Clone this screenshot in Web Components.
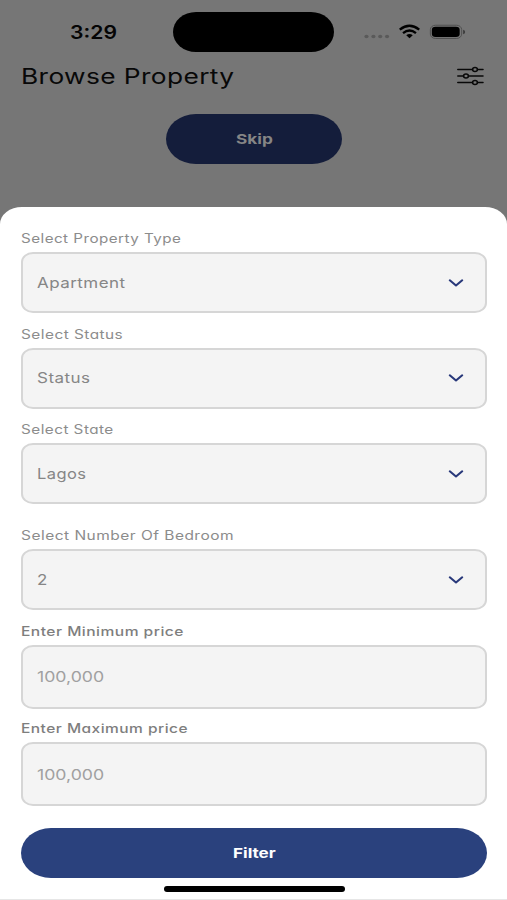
<!DOCTYPE html>
<html lang="en">
<head>
<meta charset="utf-8">
<title>Browse Property</title>
<style>
html, body { margin: 0; height: 900px; overflow: hidden; background: #767676; font-family: Inter, "Liberation Sans", sans-serif; }
</style>
</head>
<body>
<property-screen></property-screen>
<script>
const define = (name, html, setup) => {
  const tpl = document.createElement('template');
  tpl.innerHTML = html;
  customElements.define(name, class extends HTMLElement {
    constructor() {
      super();
      this.attachShadow({ mode: 'open' }).appendChild(tpl.content.cloneNode(true));
    }
    connectedCallback() { if (setup) setup(this, this.shadowRoot); }
  });
};

/* Text stretched horizontally to a given width. */
define('wide-text', `
<style>
:host { display: block; white-space: nowrap; line-height: 20px; height: 20px; font-feature-settings: "cv11"; }
:host([plain]) { font-feature-settings: normal; }
span { display: inline-block; transform-origin: 0 50%; }
</style><span></span>`, (el, root) => {
  const s = root.querySelector('span');
  s.textContent = el.getAttribute('text');
  const w = +el.getAttribute('w');
  el.style.width = w + 'px';
  s.style.transform = 'none';
  s.style.transform = 'scaleX(' + w / s.offsetWidth + ')';
});

define('status-bar', `
<style>
:host { display: flex; height: 52px; box-sizing: border-box; padding: 12px 41px 0 70px; align-items: flex-start; color: #050505; }
wide-text { font-size: 18px; font-weight: 600; margin-top: 11px; }
.island { width: 162px; height: 40px; border-radius: 23px / 20px; background: #000; margin-left: 56px; }
svg { margin-left: 29px; margin-top: 9px; display: block; }
</style>
<wide-text plain text="3:29" w="47"></wide-text>
<div class="island"></div>
<svg width="104" height="22" viewBox="0 0 104 22">
  <g fill="#5a5a5a"><ellipse cx="3.5" cy="15.5" rx="2.1" ry="1.8"/><ellipse cx="10.5" cy="15.5" rx="2.1" ry="1.8"/><ellipse cx="17.3" cy="15.5" rx="2.1" ry="1.8"/><ellipse cx="24.2" cy="15.5" rx="2.1" ry="1.8"/></g>
  <g transform="translate(.8)"><g fill="none" stroke="#000" stroke-width="2.4"><path d="M36.2 8.6Q46 0.8 55.8 8.6"/><path d="M39.5 12.1Q46 6.9 52.5 12.1"/></g>
  <path d="M42.7 14.3Q46 11.8 49.3 14.3L46 17.2Z" fill="#000"/></g>
  <rect x="67.8" y="4.2" width="31.5" height="13.3" rx="5" ry="4.4" fill="none" stroke="#505050"/>
  <rect x="69.3" y="5.7" width="28" height="10.3" rx="3.7" ry="3"/>
  <path d="M100.8 8.8Q102.8 9.2 102.8 11T100.8 13.2Z" fill="#3c3c3c"/>
</svg>`);

define('page-header', `
<style>
:host { display: flex; height: 48px; box-sizing: border-box; padding: 0 23px 0 21px; align-items: center; justify-content: space-between; color: #080808; }
wide-text { font-size: 21px; line-height: 26px; height: 26px; margin-top: 2px; letter-spacing: .3px; }
svg { display: block; }
</style>
<wide-text text="Browse Property" w="213"></wide-text>
<svg width="27" height="20" viewBox="0 0 27 20" fill="none" stroke="#080808" stroke-width="1.5" stroke-linecap="round">
  <path d="M.8 3.5H15.5M20.5 3.5H26M.8 10H6.5M11.5 10H26M.8 16.5H15.5M20.5 16.5H26"/>
  <ellipse cx="18" cy="3.5" rx="2.4" ry="2"/><ellipse cx="9" cy="10" rx="2.4" ry="2"/><ellipse cx="18" cy="16.5" rx="2.4" ry="2"/>
</svg>`);

define('pill-button', `
<style>
:host { display: flex; align-items: center; justify-content: center; height: 50px; border-radius: 30px / 25px; background: #2a417d; color: #fff; font-size: 13.5px; font-weight: 700; }
:host([dim]) { background: #141d3b; color: #858585; }
</style><slot></slot>`);

define('form-field', `
<style>
:host { display: block; }
.label { color: #8c8c8c; font-size: 12.8px; letter-spacing: .4px; padding-top: 1px; margin-bottom: 3px; }
.box { display: flex; align-items: center; justify-content: space-between; box-sizing: border-box; height: 61px; padding: 0 21px 0 14px; border: 2px solid #d6d6d6; border-radius: 12px / 10px; background: #f4f4f4; color: #868686; font-size: 14.5px; letter-spacing: .4px; }
:host([input]) .label { color: #7e7e7e; font-weight: 500; }
:host([input]) .box { height: 64px; color: #a0a0a0; padding-top: 1px; letter-spacing: 0; }
:host([input]) svg { display: none; }
svg { display: block; }
</style>
<div class="label"></div>
<div class="box"><slot></slot>
<svg width="16" height="10" viewBox="0 0 16 10"><path d="M1.8 2.3L8 7.5L14.2 2.3" fill="none" stroke="#28387a" stroke-width="2.1" stroke-linecap="round" stroke-linejoin="round"/></svg></div>`, (el, root) => {
  const t = document.createElement('wide-text');
  t.setAttribute('text', el.getAttribute('label'));
  t.setAttribute('w', el.getAttribute('lw'));
  root.querySelector('.label').replaceChildren(t);
});

define('filter-sheet', `
<style>
:host { display: flex; flex-direction: column; box-sizing: border-box; height: 693px; padding: 21px 20px 0 21px; background: #fff; border-radius: 22px 22px 0 0 / 17px 17px 0 0; border-bottom: 1px solid #e6e6e6; }
form-field { margin-bottom: 10.5px; }
.gap { margin-bottom: 21px; }
form-field[input] { margin-bottom: 9.6px; }
.home { width: 181px; height: 6px; border-radius: 3px; background: #000; margin: 8px 0 0 143px; }
pill-button { margin-top: 12px; }
</style>
<form-field label="Select Property Type" lw="160"><wide-text plain text="Apartment" w="89"></wide-text></form-field>
<form-field label="Select Status" lw="102"><wide-text plain text="Status" w="54"></wide-text></form-field>
<form-field class="gap" label="Select State" lw="93"><wide-text plain text="Lagos" w="50"></wide-text></form-field>
<form-field label="Select Number Of Bedroom" lw="213"><wide-text plain text="2" w="10.5"></wide-text></form-field>
<form-field input label="Enter Minimum price" lw="163"><wide-text plain text="100,000" w="67"></wide-text></form-field>
<form-field input label="Enter Maximum price" lw="167"><wide-text plain text="100,000" w="67"></wide-text></form-field>
<pill-button><wide-text text="Filter" w="43"></wide-text></pill-button>
<div class="home"></div>`);

define('property-screen', `
<style>
:host { display: block; width: 507px; height: 900px; overflow: hidden; background: #767676; }
.skip { width: 176px; margin: 14px 0 43px 166px; }
</style>
<status-bar></status-bar>
<page-header></page-header>
<pill-button class="skip" dim><wide-text text="Skip" w="37"></wide-text></pill-button>
<filter-sheet></filter-sheet>`);
</script>
</body>
</html>
